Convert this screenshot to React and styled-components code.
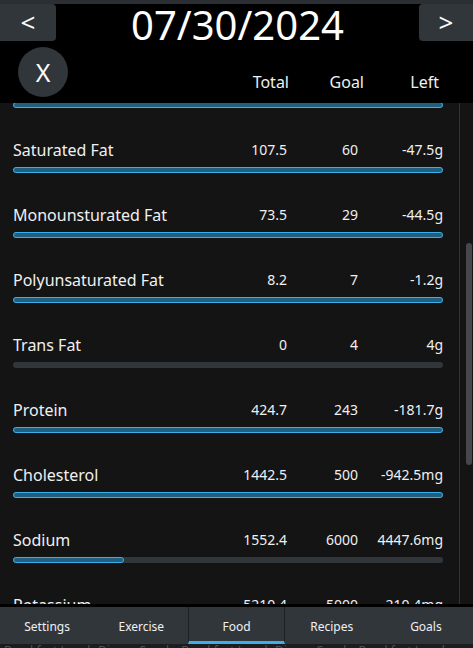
import React from 'react';
import styled, { createGlobalStyle } from 'styled-components';

const GlobalStyle = createGlobalStyle`
  html, body {
    margin: 0;
    padding: 0;
    background: #000;
  }
  body {
    font-family: "Noto Sans", "Open Sans", sans-serif;
    color: #fcfcfc;
  }
`;

const Screen = styled.div`
  width: 473px;
  height: 648px;
  display: flex;
  flex-direction: column;
  overflow: hidden;
  background: #000;
`;

const TopStrip = styled.div`
  height: 4px;
  background: #2b2f33;
`;

const DateBar = styled.div`
  display: flex;
  align-items: center;
  height: 37px;
`;

const NavButton = styled.button`
  width: ${(p) => p.$width}px;
  height: 37px;
  border: none;
  border-radius: ${(p) => (p.$side === 'left' ? '0 4px 4px 0' : '4px 0 0 4px')};
  background: #31363b;
  color: #fcfcfc;
  font-family: "Noto Sans", sans-serif;
  font-size: 26px;
  line-height: 37px;
  padding: 0;
`;

const DateText = styled.div`
  flex: 1;
  text-align: center;
  font-size: 40px;
  line-height: 37px;
  padding-top: 4px;
  color: #fff;
`;

const HeaderRow = styled.div`
  display: flex;
  align-items: center;
  height: 62px;
  padding-right: 34px;
`;

const CloseButton = styled.button`
  width: 50px;
  height: 50px;
  margin: 0 0 0 18px;
  border: none;
  border-radius: 50%;
  background: #31363b;
  color: #fcfcfc;
  font-family: "Noto Sans", sans-serif;
  font-size: 25px;
  line-height: 50px;
  padding: 0;
`;

const Spacer = styled.div`
  flex: 1;
`;

const HeadLabel = styled.div`
  width: ${(p) => p.$width}px;
  text-align: right;
  font-size: 16px;
  line-height: 22px;
  padding-top: 20px;
  color: #eff0f1;
`;

const Body = styled.div`
  flex: 1;
  display: flex;
  background: #141414;
  min-height: 0;
`;

const Viewport = styled.div`
  flex: 1;
  overflow: hidden;
`;

const List = styled.div`
  display: flex;
  flex-direction: column;
`;

const Row = styled.div`
  display: flex;
  flex-direction: column;
  height: 65px;
  padding: 32px 16px 0 13px;
  box-sizing: border-box;
`;

const Line = styled.div`
  display: grid;
  grid-template-columns: 1fr 80px 71px 85px;
  height: 20px;
  align-items: center;
  line-height: 20px;
  color: #eff0f1;
`;

const Name = styled.span`
  font-size: 16px;
  white-space: nowrap;
`;

const Num = styled.span`
  font-size: 14px;
  text-align: right;
  white-space: nowrap;
`;

const Track = styled.div`
  margin-top: 7px;
  height: 6px;
  border-radius: 3px;
  background: #31363b;
  display: flex;
`;

const Fill = styled.div`
  height: 6px;
  box-sizing: border-box;
  border: 1px solid #3daee9;
  border-radius: 3px;
  background: #1f5f80;
`;

const ScrollTrack = styled.div`
  width: 14px;
  border-left: 1px solid #343434;
  box-sizing: border-box;
  padding: 140px 1px 0 6px;
`;

const ScrollHandle = styled.div`
  width: 6px;
  height: 222px;
  border-radius: 3px;
  background: #44484c;
`;

const TabBar = styled.div`
  display: flex;
  height: 37px;
  border-top: 3px solid #000;
  background: #31363b;
`;

const Tab = styled.div`
  flex: 1;
  display: flex;
  align-items: center;
  justify-content: center;
  font-size: 12px;
  color: #eff0f1;
  box-sizing: border-box;
  border-left: ${(p) => (p.$active ? '1px solid #1e2124' : 'none')};
  border-right: ${(p) => (p.$active ? '1px solid #1e2124' : 'none')};
  border-bottom: 3px solid ${(p) => (p.$active ? '#3daee9' : 'transparent')};
  padding-top: 4px;
`;

const Under = styled.div`
  height: 4px;
  overflow: hidden;
  background: #1b1e20;
  color: #4e5357;
  font-size: 12px;
  line-height: 12px;
  white-space: nowrap;
  padding-left: 4px;
`;

const UnderText = styled.div`
  margin-top: 1px;
`;

const rows = [
  { name: 'Total Fat', total: '210.3', goal: '65', left: '-145.3g', ratio: 1 },
  { name: 'Saturated Fat', total: '107.5', goal: '60', left: '-47.5g', ratio: 1 },
  { name: 'Monounsturated Fat', total: '73.5', goal: '29', left: '-44.5g', ratio: 1 },
  { name: 'Polyunsaturated Fat', total: '8.2', goal: '7', left: '-1.2g', ratio: 1 },
  { name: 'Trans Fat', total: '0', goal: '4', left: '4g', ratio: 0 },
  { name: 'Protein', total: '424.7', goal: '243', left: '-181.7g', ratio: 1 },
  { name: 'Cholesterol', total: '1442.5', goal: '500', left: '-942.5mg', ratio: 1 },
  { name: 'Sodium', total: '1552.4', goal: '6000', left: '4447.6mg', ratio: 1552.4 / 6000 },
  { name: 'Potassium', total: '5210.4', goal: '5000', left: '-210.4mg', ratio: 1 },
];

const tabs = ['Settings', 'Exercise', 'Food', 'Recipes', 'Goals'];

// how far the list is scrolled
const scrollOffset = 60;

export default function App() {
  return (
    <Screen>
      <GlobalStyle />
      <TopStrip />
      <DateBar>
        <NavButton $side="left" $width={56}>&lt;</NavButton>
        <DateText>07/30/2024</DateText>
        <NavButton $side="right" $width={54}>&gt;</NavButton>
      </DateBar>
      <HeaderRow>
        <CloseButton>X</CloseButton>
        <Spacer />
        <HeadLabel $width={80}>Total</HeadLabel>
        <HeadLabel $width={75}>Goal</HeadLabel>
        <HeadLabel $width={75}>Left</HeadLabel>
      </HeaderRow>
      <Body>
        <Viewport>
          <List style={{ marginTop: -scrollOffset }}>
            {rows.map((r) => (
              <Row key={r.name}>
                <Line>
                  <Name>{r.name}</Name>
                  <Num>{r.total}</Num>
                  <Num>{r.goal}</Num>
                  <Num>{r.left}</Num>
                </Line>
                <Track>
                  {r.ratio > 0 && <Fill style={{ width: `${Math.min(r.ratio, 1) * 100}%` }} />}
                </Track>
              </Row>
            ))}
          </List>
        </Viewport>
        <ScrollTrack>
          <ScrollHandle />
        </ScrollTrack>
      </Body>
      <TabBar>
        {tabs.map((t) => (
          <Tab key={t} $active={t === 'Food'}>{t}</Tab>
        ))}
      </TabBar>
      <Under>
        <UnderText>Breakfast Lunch Dinner Snacks Breakfast Lunch Dinner Snacks Breakfast Lunch</UnderText>
      </Under>
    </Screen>
  );
}
